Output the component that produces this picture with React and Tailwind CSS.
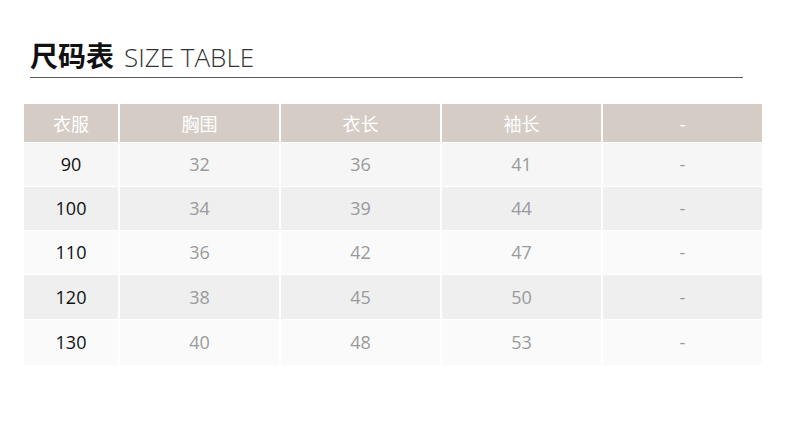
const HEADERS = ["衣服", "胸围", "衣长", "袖长", "-"];

const ROWS = [
  { size: "90", cells: ["32", "36", "41", "-"], bg: "bg-[#f6f6f6]", h: "h-[43px]" },
  { size: "100", cells: ["34", "39", "44", "-"], bg: "bg-[#efefef]", h: "h-[43px]" },
  { size: "110", cells: ["36", "42", "47", "-"], bg: "bg-[#fafafa]", h: "h-[43px]" },
  { size: "120", cells: ["38", "45", "50", "-"], bg: "bg-[#efefef]", h: "h-[44px]" },
  { size: "130", cells: ["40", "48", "53", "-"], bg: "bg-[#fafafa]", h: "h-[45px]" },
];

const FONT = "font-['Open_Sans','Noto_Sans_CJK_SC',sans-serif]";

export default function App() {
  return (
    <div className={`w-[790px] h-[421px] bg-white ${FONT}`}>
      {/* Title */}
      <div className="pt-[38px] pl-[30px] w-[743px]">
        <div className="flex items-baseline gap-[10px] border-b border-[#5a5a5a] pb-[3px]">
          <span className="text-[28px] leading-[34px] font-bold text-[#111] font-['Noto_Sans_CJK_SC',sans-serif]">
            尺码表
          </span>
          <span className="text-[26px] leading-[34px] font-light text-[#333]">SIZE TABLE</span>
        </div>
      </div>

      {/* Table */}
      <div className="mt-[26px] ml-[24px] grid grid-cols-[94px_159px_159px_159px_159px] gap-x-[2px] gap-y-[1px] w-[738px]">
        {HEADERS.map((h) => (
          <div
            key={h}
            className="h-[38px] bg-[#d5ccc6] flex items-center justify-center text-[18px] text-white font-['Noto_Sans_CJK_SC',sans-serif]"
          >
            {h}
          </div>
        ))}
        {ROWS.map((row) => (
          <div key={row.size} className="contents">
            <div className={`${row.h} ${row.bg} flex items-center justify-center text-[18px] text-[#111]`}>
              {row.size}
            </div>
            {row.cells.map((c, i) => (
              <div
                key={i}
                className={`${row.h} ${row.bg} flex items-center justify-center text-[18px] text-[#9a9a9a]`}
              >
                {c}
              </div>
            ))}
          </div>
        ))}
      </div>
    </div>
  );
}
